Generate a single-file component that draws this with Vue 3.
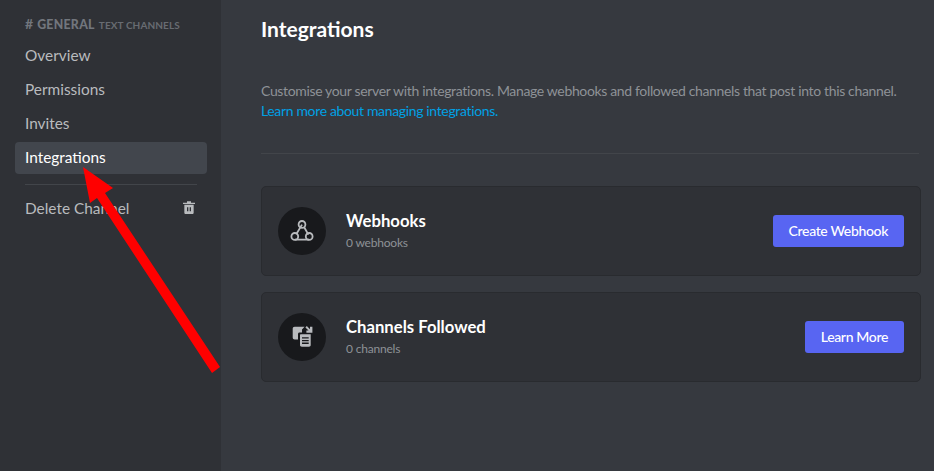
<script setup>
const navItems = [
  { label: 'Overview' },
  { label: 'Permissions' },
  { label: 'Invites' },
  { label: 'Integrations', selected: true },
]

const rows = [
  { id: 'webhooks', title: 'Webhooks', sub: '0 webhooks', action: 'Create Webhook' },
  { id: 'channels', title: 'Channels Followed', sub: '0 channels', action: 'Learn More' },
]
</script>

<template>
  <div class="page">
    <aside class="sidebar">
      <div class="side-header">
        <span class="hash">#</span>
        <span class="chan">GENERAL</span>
        <span class="kind">TEXT CHANNELS</span>
      </div>
      <nav class="nav">
        <div v-for="item in navItems" :key="item.label" class="nav-item" :class="{ selected: item.selected }">
          {{ item.label }}
        </div>
      </nav>
      <div class="side-sep"></div>
      <div class="nav-item delete">
        <span>Delete Channel</span>
        <svg class="trash" viewBox="0 0 24 24" width="16" height="16" fill="currentColor">
          <path d="M15 3.999V2H9V3.999H3V5.999H21V3.999H15Z" />
          <path d="M5 6.99902V18.999C5 20.101 5.897 20.999 7 20.999H17C18.103 20.999 19 20.101 19 18.999V6.99902H5ZM11 17H9V11H11V17ZM15 17H13V11H15V17Z" />
        </svg>
      </div>
    </aside>

    <main class="content">
      <h1 class="title">Integrations</h1>
      <p class="desc">
        Customise your server with integrations. Manage webhooks and followed channels that post into this channel.
        <a class="link">Learn more about managing integrations.</a>
      </p>
      <div class="sep"></div>
      <div class="cards">
        <section v-for="row in rows" :key="row.id" class="card">
          <div class="circle">
            <svg v-if="row.id === 'webhooks'" viewBox="0 0 24 24" width="24" height="24" fill="none" stroke="#b9bbbe" stroke-width="1.8">
              <circle cx="12" cy="5.4" r="3.4" />
              <circle cx="4.8" cy="17.4" r="3.4" />
              <circle cx="19.2" cy="17.4" r="3.4" />
              <path d="M12 5.6 6.4 15M14.2 8.2 18.4 15.6M5 20.6H19" />
            </svg>
            <svg v-else viewBox="0 0 24 24" width="24" height="24" fill="#b9bbbe">
              <path d="M4.7 1.7H14.6L12 4.4V7.6H9.6C8.6 7.6 8 8.3 8 9.2V14.4H4.7C3.4 14.4 2.7 13.6 2.7 12.4V3.7C2.7 2.5 3.4 1.7 4.7 1.7Z" />
              <path fill-rule="evenodd" d="M10.6 9.3H20.7V20C20.7 21 20 21.7 19 21.7H11.8C10.8 21.7 10 21 10 20V9.9C10 9.5 10.2 9.3 10.6 9.3ZM12 12.2V13.5H18.7V12.2ZM12 14.9V16.2H18.7V14.9ZM12 17.6V18.9H18.7V17.6Z" />
              <path d="M15.4 2.4 16.8 1 20 4.2V1.8H22.4V7.8H16.4V5.6H18.6Z" />
            </svg>
          </div>
          <div class="card-text">
            <div class="card-title">{{ row.title }}</div>
            <div class="card-sub">{{ row.sub }}</div>
          </div>
          <button class="btn">{{ row.action }}</button>
        </section>
      </div>
    </main>

    <!-- red annotation drawn on top of the screenshot -->
    <svg class="arrow" viewBox="0 0 934 471" width="934" height="471">
      <polygon points="83,167 113,188 105,193 220,367 212,373 97,198 90,203" fill="#ff0000" />
    </svg>
  </div>
</template>

<style>
body {
  margin: 0;
  background: #36393f;
}
</style>

<style scoped>
.page {
  position: relative;
  display: flex;
  width: 934px;
  height: 471px;
  overflow: hidden;
  background: #36393f;
  font-family: 'Lato', 'Noto Sans', sans-serif;
}

.sidebar {
  box-sizing: border-box;
  width: 221px;
  flex-shrink: 0;
  padding: 16px 14px 0 15px;
  background: #2f3136;
}

.side-header {
  display: flex;
  align-items: baseline;
  gap: 4px;
  height: 16px;
  padding-left: 10px;
  margin-bottom: 8px;
  line-height: 16px;
  color: #72767d;
  white-space: nowrap;
}

.hash {
  font-size: 14px;
  font-weight: 700;
}

.chan {
  font-size: 12.3px;
  font-weight: 900;
  letter-spacing: 0.3px;
}

.kind {
  font-size: 10px;
  font-weight: 700;
  letter-spacing: 0.1px;
  color: #686c72;
}

.nav {
  display: flex;
  flex-direction: column;
  gap: 2px;
}

.nav-item {
  box-sizing: border-box;
  height: 32px;
  padding: 0 10px;
  border-radius: 4px;
  font-size: 15.4px;
  line-height: 30px;
  color: #b9bbbe;
}

.nav-item.selected {
  background: #42464d;
  color: #fff;
}

.side-sep {
  height: 1px;
  margin: 10px 10px 7px;
  background: #42454a;
}

.delete {
  display: flex;
  align-items: center;
  justify-content: space-between;
  padding-right: 10px;
}

.trash {
  color: #b9bbbe;
}

.content {
  flex: 1;
  min-width: 0;
  box-sizing: border-box;
  padding: 15px 13px 0 40px;
}

.title {
  margin: 0;
  font-size: 21px;
  font-weight: 700;
  line-height: 28px;
  color: #fff;
}

.desc {
  margin: 38px 0 0;
  font-size: 14px;
  letter-spacing: -0.35px;
  line-height: 20px;
  color: #8e9297;
  white-space: nowrap;
}

.link {
  display: block;
  color: #00a0e4;
}

.sep {
  height: 1px;
  margin: 32px 2px 0 0;
  background: #42454a;
}

.cards {
  display: flex;
  flex-direction: column;
  gap: 16px;
  margin-top: 32px;
}

.card {
  box-sizing: border-box;
  display: flex;
  align-items: center;
  height: 90px;
  padding: 0 16px;
  border: 1px solid #292b2f;
  border-radius: 5px;
  background: #2f3136;
}

.circle {
  display: flex;
  align-items: center;
  justify-content: center;
  width: 48px;
  height: 48px;
  border-radius: 50%;
  background: #18191c;
}

.card-text {
  flex: 1;
  margin-left: 20px;
}

.card-title {
  font-size: 16.7px;
  font-weight: 700;
  line-height: 20px;
  color: #fff;
}

.card-sub {
  margin-top: 4px;
  font-size: 12px;
  letter-spacing: -0.2px;
  line-height: 16px;
  color: #8e9297;
}

.btn {
  height: 32px;
  padding: 0 16px 2px;
  border: 0;
  border-radius: 3px;
  background: #5865f2;
  font-family: inherit;
  font-size: 14px;
  letter-spacing: -0.35px;
  font-weight: 500;
  color: #fff;
}

.arrow {
  position: absolute;
  top: 0;
  left: 0;
  pointer-events: none;
}
</style>
